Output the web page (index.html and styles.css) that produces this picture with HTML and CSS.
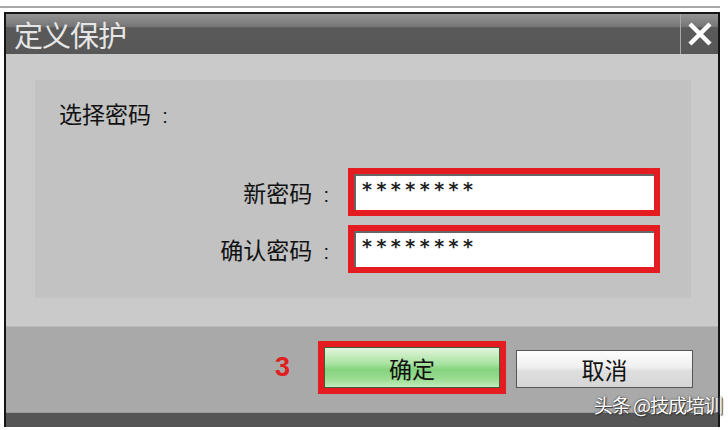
FILE: index.html
```html
<!DOCTYPE html>
<html lang="zh-CN">
<head>
    <meta charset="UTF-8">
    <title>定义保护</title>
    <link rel="stylesheet" href="styles.css">
</head>
<body>
    <div class="topline"></div>
    <div class="dialog">
        <div class="titlebar">
            <span class="title">定义保护</span>
            <div class="close">
                <svg width="26" height="26" viewBox="0 0 26 26">
                    <path d="M3 3 L23 23 M23 3 L3 23" stroke="#fff" stroke-width="4.5" stroke-linecap="butt"/>
                </svg>
            </div>
        </div>
        <div class="content">
            <div class="panel">
                <div class="heading">选择密码 <span class="colon">:</span></div>
                <div class="form">
                    <label class="lbl">新密码 <span class="colon">:</span></label>
                    <div class="mark"><div class="field">********</div></div>
                    <label class="lbl">确认密码 <span class="colon">:</span></label>
                    <div class="mark"><div class="field">********</div></div>
                </div>
            </div>
        </div>
        <div class="footer">
            <span class="step">3</span>
            <div class="mark btn-mark"><button class="btn ok">确定</button></div>
            <button class="btn cancel">取消</button>
        </div>
        <div class="bottom"></div>
        <div class="watermark">头条 @技成培训</div>
    </div>
</body>
</html>
```

FILE: styles.css
```css
body {
    margin: 0;
    background: #fff;
    font-family: "Noto Sans CJK SC", "Liberation Sans", sans-serif;
    width: 728px;
    height: 430px;
    overflow: hidden;
}
.topline {
    margin-top: 6px;
    width: 720px;
    height: 2px;
    background: #a9a9a9;
}
.dialog {
    position: relative;
    margin: 4px 0 0 4px;
    width: 712px;
    border: 2px solid #151515;
    border-bottom: none;
    background: #cacaca;
}
.titlebar {
    display: flex;
    height: 40px;
    background: linear-gradient(#949494 0%, #747474 33%, #5a5a5a 34%, #575757 100%);
}
.title {
    flex: 1;
    padding-left: 8px;
    color: #e6e6e6;
    font-size: 29px;
    line-height: 40px;
    letter-spacing: -1px;
}
.close {
    width: 37px;
    border-left: 1px solid #a8a8a8;
    display: flex;
    align-items: center;
    justify-content: center;
}
.content {
    padding: 26px 27px 27px 29px;
    height: 219px;
}
.panel {
    height: 218px;
    background: #c2c2c2;
    padding: 19px 0 0 0;
    box-sizing: border-box;
}
.heading {
    padding-left: 24px;
    font-size: 23px;
    line-height: 28px;
    color: #111;
}
.colon {
    font-family: "Liberation Sans", sans-serif;
    font-size: 20px;
    margin-left: 6px;
    margin-right: 4px;
}
.form {
    margin-top: 38px;
    display: grid;
    grid-template-columns: 298px 312px;
    grid-auto-rows: 48px;
    column-gap: 15px;
    row-gap: 9px;
}
.lbl {
    text-align: right;
    font-size: 23px;
    line-height: 48px;
    color: #111;
}
.mark {
    border: 6px solid #e41b1f;
}
.field {
    height: 100%;
    box-sizing: border-box;
    background: #fff;
    border-top: 2px solid #666;
    border-left: 2px solid #666;
    padding: 2px 0 0 6px;
    font-family: "DejaVu Sans", sans-serif;
    font-weight: bold;
    font-size: 19px;
    letter-spacing: 4.5px;
    line-height: 22px;
    color: #222;
}
.footer {
    display: flex;
    align-items: flex-start;
    height: 86px;
    padding: 14px 25px 0 0;
    box-sizing: border-box;
    background: #a9a9a9;
    border-top: 1px solid #b8b8b8;
    justify-content: flex-end;
}
.step {
    margin: 14px 28px 0 0;
    color: #e02020;
    font-family: "Liberation Sans", sans-serif;
    font-weight: bold;
    font-size: 27px;
    line-height: 24px;
}
.btn-mark {
    margin-right: 10px;
}
.btn {
    font-family: "Noto Sans CJK SC", sans-serif;
    font-size: 23px;
    color: #111;
    padding: 0;
    cursor: pointer;
}
.ok {
    display: block;
    width: 176px;
    height: 41px;
    border: 1px solid #3d5e3d;
    background: linear-gradient(#e2f5dc 0%, #a9e3a1 40%, #86d37e 55%, #9bdc92 80%, #c4ecbd 100%);
}
.cancel {
    margin-top: 9px;
    width: 177px;
    height: 38px;
    border: 1px solid #555;
    background: linear-gradient(#fdfdfd 0%, #efefef 45%, #dedede 55%, #d6d6d6 100%);
}
.bottom {
    height: 14px;
    background: #555;
    border-top: 1px solid #999;
}
.watermark {
    position: absolute;
    right: -4px;
    bottom: 9px;
    color: #fff;
    font-size: 19px;
    letter-spacing: -1px;
    text-shadow: 0 0 2px #333, 1px 1px 1px #333;
}
```
